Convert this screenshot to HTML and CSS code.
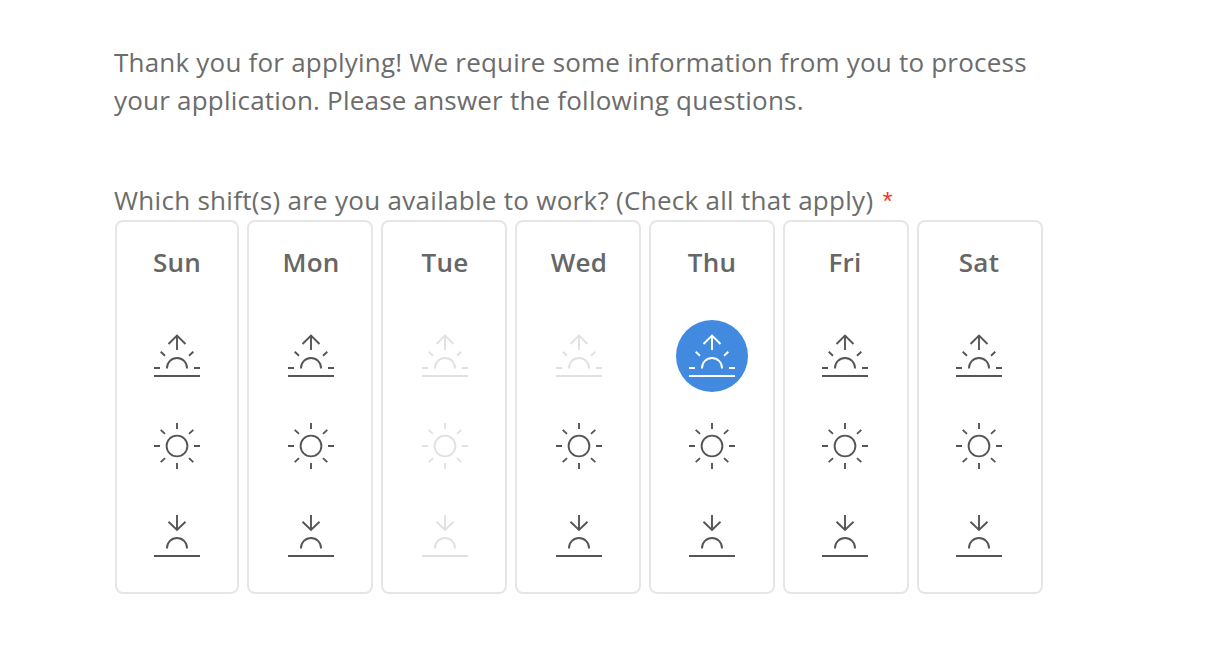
FILE: index.html
```html
<!DOCTYPE html>
<html lang="en">
<head>
<meta charset="utf-8">
<title>Application</title>
<link rel="stylesheet" href="styles.css">
</head>
<body>
<svg class="defs" width="0" height="0" aria-hidden="true">
  <symbol id="sunrise" viewBox="0 0 46 46">
    <path d="M23 17V3M14.5 11L23 2.5L31.5 11M6.7 18.7L11 22.7M39.3 18.7L35 22.7M0 35H6M40 35H46M13 35.5V35a10 10 0 0 1 20 0v.5M0 43H46"/>
  </symbol>
  <symbol id="day" viewBox="0 0 46 46">
    <circle cx="23" cy="23" r="10.4"/>
    <path d="M23 0V6M23 40V46M0 23H6M40 23H46M6.7 6.9L11 10.9M39.3 6.9L35 10.9M6.7 39.1L11 35.1M39.3 39.1L35 35.1"/>
  </symbol>
  <symbol id="sunset" viewBox="0 0 46 46">
    <path d="M23 2V17M14.5 8.7L23 17L31.5 8.7M13 35.5V35a10 10 0 0 1 20 0v.5M0 43H46"/>
  </symbol>
</svg>
<main class="page">
  <p class="intro">Thank you for applying! We require some information from you to process your application. Please answer the following questions.</p>
  <p class="question">Which shift(s) are you available to work? (Check all that apply) <span class="req">*</span></p>
  <div class="week">
    <section class="day"><h3>Sun</h3>
      <span class="shift"><svg><use href="#sunrise"/></svg></span>
      <span class="shift"><svg><use href="#day"/></svg></span>
      <span class="shift"><svg><use href="#sunset"/></svg></span></section>
    <section class="day"><h3>Mon</h3>
      <span class="shift"><svg><use href="#sunrise"/></svg></span>
      <span class="shift"><svg><use href="#day"/></svg></span>
      <span class="shift"><svg><use href="#sunset"/></svg></span></section>
    <section class="day"><h3>Tue</h3>
      <span class="shift off"><svg><use href="#sunrise"/></svg></span>
      <span class="shift off"><svg><use href="#day"/></svg></span>
      <span class="shift off"><svg><use href="#sunset"/></svg></span></section>
    <section class="day"><h3>Wed</h3>
      <span class="shift off"><svg><use href="#sunrise"/></svg></span>
      <span class="shift"><svg><use href="#day"/></svg></span>
      <span class="shift"><svg><use href="#sunset"/></svg></span></section>
    <section class="day"><h3>Thu</h3>
      <span class="shift on"><svg><use href="#sunrise"/></svg></span>
      <span class="shift"><svg><use href="#day"/></svg></span>
      <span class="shift"><svg><use href="#sunset"/></svg></span></section>
    <section class="day"><h3>Fri</h3>
      <span class="shift"><svg><use href="#sunrise"/></svg></span>
      <span class="shift"><svg><use href="#day"/></svg></span>
      <span class="shift"><svg><use href="#sunset"/></svg></span></section>
    <section class="day"><h3>Sat</h3>
      <span class="shift"><svg><use href="#sunrise"/></svg></span>
      <span class="shift"><svg><use href="#day"/></svg></span>
      <span class="shift"><svg><use href="#sunset"/></svg></span></section>
  </div>
</main>
</body>
</html>
```
FILE: styles.css
```css
* { box-sizing: border-box; }
html, body { margin: 0; background: #fff; }
body {
  font-family: "Open Sans", "Noto Sans", sans-serif;
  color: #6c6c6c;
  overflow: hidden;
}
.defs { display: block; height: 0; }
.page { padding: 43px 0 0 114px; width: 1060px; }
.intro {
  margin: 0 0 62px;
  font-size: 26px;
  line-height: 38px;
  letter-spacing: 0.21px;
  width: 930px;
}
.question {
  margin: 0 0 1px;
  font-size: 26px;
  line-height: 38px;
  letter-spacing: 0.29px;
  white-space: nowrap;
}
.req {
  color: #f2362b;
  font-family: "Liberation Sans", sans-serif;
  line-height: 1;
  margin-left: 2px;
}
.week {
  display: grid;
  grid-template-columns: 124px repeat(6, 126px);
  gap: 8px;
  margin-left: 1px;
}
.day {
  height: 374px;
  border: 2px solid #e6e6e6;
  border-radius: 8px;
  display: flex;
  flex-direction: column;
  align-items: center;
}
.day:nth-child(n+2):nth-child(-n+4) { padding-left: 2px; }
.day:nth-child(n+6) { padding-right: 2px; }
.day h3 {
  flex: none;
  margin: 0;
  height: 98px;
  padding-top: 21px;
  font-size: 26px;
  line-height: 38px;
  letter-spacing: 0.3px;
  font-weight: 600;
  color: #666;
}
.shift {
  flex: none;
  width: 72px;
  height: 72px;
  margin-bottom: 18px;
  border-radius: 50%;
  display: flex;
  align-items: center;
  justify-content: center;
  color: #555;
}
.shift svg {
  width: 46px;
  height: 46px;
  fill: none;
  stroke: currentColor;
  stroke-width: 1.9;
}
.shift.off { opacity: 0.17; }
.shift.on { background: #418ae0; color: #fff; }
```
